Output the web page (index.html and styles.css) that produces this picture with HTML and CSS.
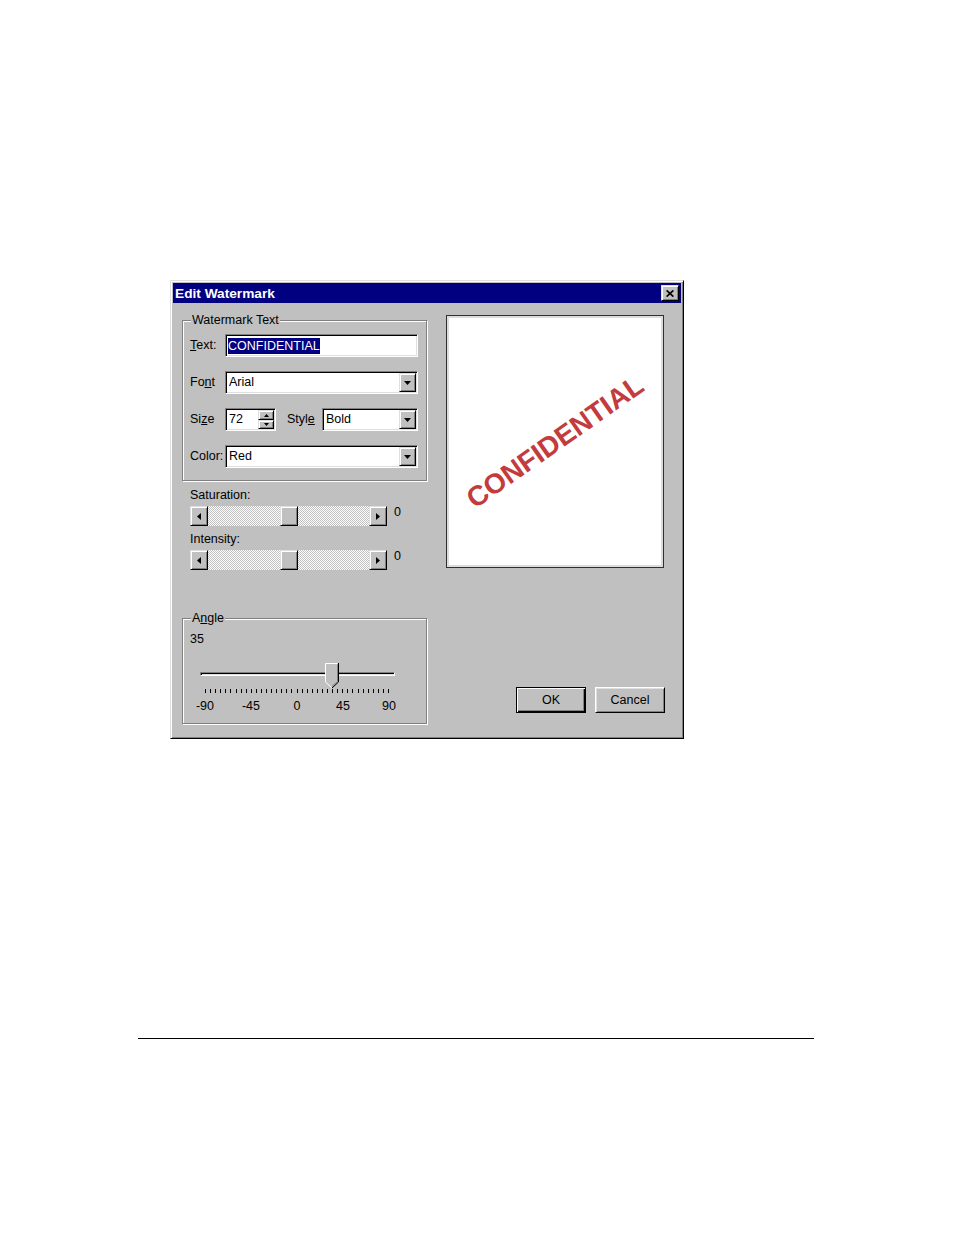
FILE: index.html
```html
<!DOCTYPE html>
<html>
<head>
<meta charset="utf-8">
<title>Edit Watermark</title>
<link rel="stylesheet" href="styles.css">
</head>
<body>
<div class="page">
  <div class="dialog">
    <div class="titlebar">
      <span class="title">Edit Watermark</span>
      <span class="close btn3d"><svg width="8" height="7" viewBox="0 0 8 7"><path d="M0.6 0.4 L7.4 6.6 M7.4 0.4 L0.6 6.6" stroke="#000" stroke-width="1.7"/></svg></span>
    </div>
    <div class="dialog-body">
      <div class="left">
        <div class="group group-text">
          <span class="group-label">Watermark Text</span>
          <div class="row">
            <span class="lbl"><u>T</u>ext:</span>
            <div class="field text-field"><span class="sel">CONFIDENTIAL</span></div>
          </div>
          <div class="row">
            <span class="lbl">Fo<u>n</u>t</span>
            <div class="field combo combo-wide"><span class="combo-text">Arial</span><span class="drop btn3d"><svg width="7" height="4" viewBox="0 0 7 4"><path d="M0 0H7L3.5 4Z"/></svg></span></div>
          </div>
          <div class="row">
            <span class="lbl">Si<u>z</u>e</span>
            <div class="field combo spin"><span class="combo-text">72</span><span class="spin-btns"><span class="spin-up btn3d"><svg width="5" height="3" viewBox="0 0 5 3"><path d="M2.5 0L5 3H0Z"/></svg></span><span class="spin-down btn3d"><svg width="5" height="3" viewBox="0 0 5 3"><path d="M0 0H5L2.5 3Z"/></svg></span></span></div>
            <span class="lbl style-lbl">Styl<u>e</u></span>
            <div class="field combo combo-style"><span class="combo-text">Bold</span><span class="drop btn3d"><svg width="7" height="4" viewBox="0 0 7 4"><path d="M0 0H7L3.5 4Z"/></svg></span></div>
          </div>
          <div class="row">
            <span class="lbl">Color:</span>
            <div class="field combo combo-wide"><span class="combo-text">Red</span><span class="drop btn3d"><svg width="7" height="4" viewBox="0 0 7 4"><path d="M0 0H7L3.5 4Z"/></svg></span></div>
          </div>
        </div>

        <div class="sliders">
          <div class="slider-label first">Saturation:</div>
          <div class="scroll-row">
            <div class="scrollbar">
              <span class="sb-btn btn3d"><svg width="4" height="7" viewBox="0 0 4 7"><path d="M4 0V7L0 3.5Z"/></svg></span>
              <span class="sb-track"><span class="sb-thumb btn3d"></span></span>
              <span class="sb-btn btn3d"><svg width="4" height="7" viewBox="0 0 4 7"><path d="M0 0V7L4 3.5Z"/></svg></span>
            </div>
            <span class="sb-val">0</span>
          </div>

          <div class="slider-label">Intensity:</div>
          <div class="scroll-row">
            <div class="scrollbar">
              <span class="sb-btn btn3d"><svg width="4" height="7" viewBox="0 0 4 7"><path d="M4 0V7L0 3.5Z"/></svg></span>
              <span class="sb-track"><span class="sb-thumb btn3d"></span></span>
              <span class="sb-btn btn3d"><svg width="4" height="7" viewBox="0 0 4 7"><path d="M0 0V7L4 3.5Z"/></svg></span>
            </div>
            <span class="sb-val">0</span>
          </div>
        </div>

        <div class="group group-angle">
          <span class="group-label">A<u>n</u>gle</span>
          <div class="angle-val">35</div>
          <div class="trackbar">
            <div class="groove"></div>
            <svg class="tb-thumb" style="left:135px" width="14" height="25" viewBox="0 0 14 25">
              <path d="M0.5 0.5H13.5V19L7 24.5L0.5 19Z" fill="#c0c0c0"/>
              <path d="M0.5 19V0.5H12.5" stroke="#fff" fill="none"/>
              <path d="M0.5 19L6.5 24.5" stroke="#fff" fill="none"/>
              <path d="M13.5 0V19L7 25" stroke="#000" fill="none"/>
              <path d="M12.5 1.5V18.6L7 23.3" stroke="#808080" fill="none"/>
            </svg>
            <svg class="ticks" width="185" height="5" viewBox="0 0 185 5"><path stroke="#000" d="M0.5 0v4M5.5 0v4M10.5 0v4M15.5 0v4M20.5 0v4M25.5 0v4M31.5 0v4M36.5 0v4M41.5 0v4M46.5 0v4M51.5 0v4M56.5 0v4M61.5 0v4M66.5 0v4M71.5 0v4M76.5 0v4M81.5 0v4M86.5 0v4M92.5 0v4M97.5 0v4M102.5 0v4M107.5 0v4M112.5 0v4M117.5 0v4M122.5 0v4M127.5 0v4M132.5 0v4M137.5 0v4M142.5 0v4M147.5 0v4M153.5 0v4M158.5 0v4M163.5 0v4M168.5 0v4M173.5 0v4M178.5 0v4M183.5 0v4"/></svg>
          </div>
          <div class="tick-labels"><span>-90</span><span>-45</span><span>0</span><span>45</span><span>90</span></div>
        </div>
      </div>

      <div class="right">
        <div class="preview"><span class="wm">CONFIDENTIAL</span></div>
        <div class="buttons">
          <span class="btn btn-default">OK</span>
          <span class="btn btn-normal">Cancel</span>
        </div>
      </div>
    </div>
  </div>
  <div class="rule"></div>
</div>
</body>
</html>
```

FILE: styles.css
```css
html, body {
  margin: 0;
  background: #fff;
}

body {
  font-family: "Liberation Sans", Arial, sans-serif;
  font-size: 12.5px;
  line-height: 15px;
  color: #000;
}

.page {
  padding: 280px 0 0 170px;
}

.dialog {
  width: 514px;
  height: 459px;
  box-sizing: border-box;
  background: #c0c0c0;
  border: 1px solid;
  border-color: #dfdfdf #000 #000 #dfdfdf;
  box-shadow: inset 1px 1px 0 #fff, inset -1px -1px 0 #808080;
  padding: 2px;
  display: flex;
  flex-direction: column;
}

.btn3d {
  box-sizing: border-box;
  background: #c0c0c0;
  border: 1px solid;
  border-color: #dfdfdf #000 #000 #dfdfdf;
  box-shadow: inset 1px 1px 0 #fff, inset -1px -1px 0 #808080;
  display: flex;
  align-items: center;
  justify-content: center;
}

.titlebar {
  height: 20px;
  background: #000080;
  display: flex;
  align-items: center;
  justify-content: space-between;
  padding: 0 2px;
}

.title {
  color: #fff;
  font-weight: bold;
  font-size: 13.7px;
}

.close {
  width: 18px;
  height: 16px;
}

.dialog-body {
  display: flex;
  gap: 18px;
  padding-left: 9px;
}

.left {
  width: 246px;
  display: flex;
  flex-direction: column;
}

.right {
  width: 219px;
  display: flex;
  flex-direction: column;
}

.group {
  position: relative;
  width: 245px;
  box-sizing: border-box;
  border: 1px solid #808080;
  box-shadow: 1px 1px 0 #fff, inset 1px 1px 0 #fff;
}

.group-label {
  position: absolute;
  top: -8px;
  left: 8px;
  padding: 0 1px;
  background: #c0c0c0;
}

.group-text {
  margin-top: 17px;
  padding: 13px 7px 12px 7px;
  display: flex;
  flex-direction: column;
  gap: 14px;
}

.row {
  display: flex;
  align-items: center;
  height: 23px;
}

.lbl {
  width: 35px;
  flex: none;
}

.style-lbl {
  margin-left: 11px;
}

.field {
  box-sizing: border-box;
  height: 23px;
  flex: none;
  background: #fff;
  border: 1px solid;
  border-color: #808080 #fff #fff #808080;
  box-shadow: inset 1px 1px 0 #000, inset -1px -1px 0 #dfdfdf;
}

.text-field {
  width: 193px;
  padding: 0 0 0 2px;
  display: flex;
  align-items: center;
}

.sel {
  background: #000080;
  color: #fff;
  line-height: 16px;
}

.combo {
  display: flex;
  align-items: center;
  padding: 1px;
}

.combo-wide {
  width: 193px;
}

.combo-style {
  width: 96px;
}

.spin {
  width: 51px;
}

.combo-text {
  margin-left: 2px;
  flex: 1;
}

.drop {
  width: 17px;
  height: 19px;
}

.spin-btns {
  width: 16px;
  height: 19px;
  display: flex;
  flex-direction: column;
}

.spin-up {
  height: 10px;
}

.spin-down {
  height: 9px;
}

.sliders {
  padding-left: 8px;
}

.slider-label {
  margin-top: 6px;
}

.slider-label.first {
  margin-top: 7px;
}

.scroll-row {
  display: flex;
  margin-top: 3px;
}

.scrollbar {
  width: 197px;
  height: 20px;
  display: flex;
}

.sb-btn {
  width: 18px;
  height: 20px;
  flex: none;
}

.sb-track {
  flex: 1;
  display: flex;
  justify-content: center;
  background: repeating-conic-gradient(#fff 0 25%, #c0c0c0 0 50%) 0 0 / 2px 2px;
}

.sb-thumb {
  width: 18px;
  height: 20px;
}

.sb-val {
  margin: -1px 0 0 7px;
}

.group-angle {
  margin-top: 48px;
  padding: 13px 7px 9px 7px;
}

.trackbar {
  position: relative;
  height: 34px;
  margin-top: 13px;
  display: flex;
  flex-direction: column;
}

.groove {
  margin: 12px 0 0 10px;
  width: 195px;
  height: 4px;
  box-sizing: border-box;
  border: 1px solid;
  border-color: #808080 #fff #fff #808080;
  box-shadow: inset 1px 1px 0 #000, inset -1px -1px 0 #dfdfdf;
}

.tb-thumb {
  position: absolute;
  top: 3px;
}

.ticks {
  display: block;
  margin: 13px 0 0 15px;
}

.tick-labels {
  display: grid;
  grid-template-columns: repeat(5, 46px);
  margin: 5px 0 0 -8px;
  text-align: center;
}

.preview {
  margin-top: 12px;
  width: 218px;
  height: 253px;
  box-sizing: border-box;
  background: #fff;
  border: 1px solid #303030;
  box-shadow: inset 0 0 0 2px #dcdcdc;
  display: flex;
  align-items: center;
  justify-content: center;
  overflow: hidden;
}

.wm {
  font-weight: bold;
  font-size: 28px;
  line-height: 28px;
  color: #c43b3d;
  transform: rotate(-35deg);
  white-space: nowrap;
}

.buttons {
  margin-top: 119px;
  display: flex;
  justify-content: flex-end;
  gap: 9px;
}

.btn {
  width: 70px;
  height: 26px;
  box-sizing: border-box;
  background: #c0c0c0;
  display: flex;
  align-items: center;
  justify-content: center;
}

.btn-default {
  border: 1px solid #000;
  box-shadow: inset 1px 1px 0 #fff, inset -1px -1px 0 #000, inset -2px -2px 0 #808080;
}

.btn-normal {
  border: 1px solid;
  border-color: #fff #000 #000 #fff;
  box-shadow: inset 1px 1px 0 #dfdfdf, inset -1px -1px 0 #808080;
}

.rule {
  margin: 299px 0 0 -32px;
  width: 676px;
  height: 1px;
  background: #000;
}
```
